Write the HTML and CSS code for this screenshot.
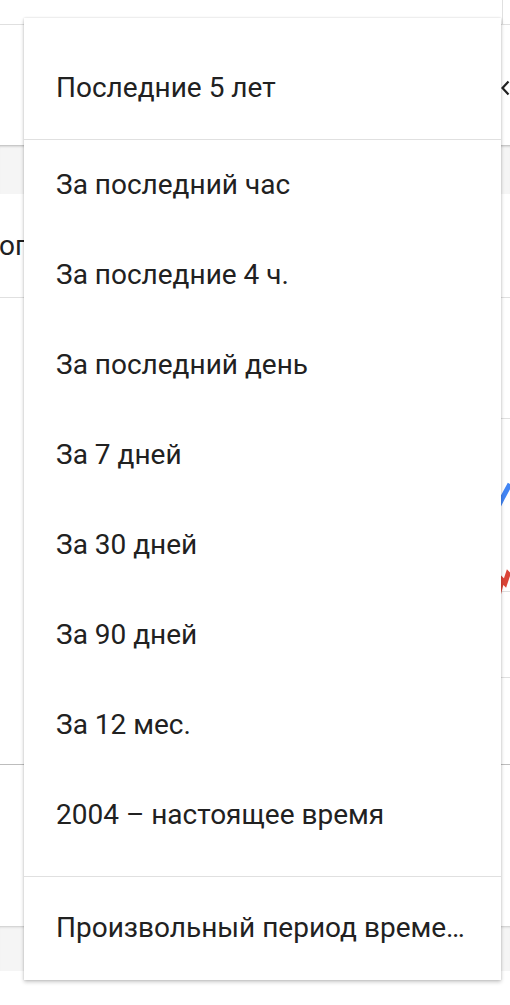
FILE: index.html
```html
<!DOCTYPE html>
<html lang="ru">
<head>
<meta charset="utf-8">
<title>Период времени</title>
<link rel="stylesheet" href="styles.css">
</head>
<body>
<div class="page">
  <div class="topbar"><div class="topbar-edge"></div></div>
  <div class="header">
    <svg class="share" width="10" height="16" viewBox="0 0 10 16"><path d="M8.5 1.5 L2.5 8 L8.5 14.5" fill="none" stroke="#222" stroke-width="2.2"/></svg>
  </div>
  <div class="band"></div>
  <div class="card">
    <div class="card-title">ог</div>
    <div class="chart">
      <div class="grid-row grid-row-1"></div>
      <div class="grid-row grid-row-2"></div>
      <div class="grid-row grid-row-3"></div>
      <svg class="lines" width="410" height="380" viewBox="100 298 410 380">
        <polyline points="440,560 470,540 499,505 503,497 510,484" fill="none" stroke="#4285f4" stroke-width="5"/>
        <polyline points="440,590 480,588 499,592 502,580 505,583 508,574 510,576" fill="none" stroke="#db4437" stroke-width="5"/>
      </svg>
    </div>
    <div class="legend"></div>
  </div>
  <div class="band band-low"></div>
</div>

<div class="menu">
  <div class="menu-top">
    <div class="item">Последние 5 лет</div>
  </div>
  <div class="menu-list">
    <div class="item">За последний час</div>
    <div class="item">За последние 4 ч.</div>
    <div class="item">За последний день</div>
    <div class="item">За 7 дней</div>
    <div class="item">За 30 дней</div>
    <div class="item">За 90 дней</div>
    <div class="item">За 12 мес.</div>
    <div class="item">2004 – настоящее время</div>
  </div>
  <div class="menu-bottom">
    <div class="item">Произвольный период време…</div>
  </div>
</div>
</body>
</html>
```

FILE: styles.css
```css
html, body {
  margin: 0;
  padding: 0;
  background: #fff;
}

body {
  font-family: "Roboto", "Noto Sans", sans-serif;
  color: #212121;
  width: 510px;
  height: 1005px;
  overflow: hidden;
  position: relative;
}

.page {
  display: flex;
  flex-direction: column;
}

.topbar {
  height: 24px;
  border-bottom: 1px solid #e0e0e0;
  display: flex;
  justify-content: flex-end;
}

.topbar-edge {
  width: 7px;
  border-left: 1px solid #e0e0e0;
}

.header {
  height: 120px;
  display: flex;
  justify-content: flex-end;
  align-items: center;
  padding-top: 6px;
  box-sizing: border-box;
}

.share {
  margin-right: 0;
}

.band {
  height: 48px;
  background: #f5f5f5;
  border-top: 1px solid #c9c9c9;
  box-shadow: inset 0 2px 2px -1px rgba(0, 0, 0, 0.12);
}

.card {
  display: flex;
  flex-direction: column;
}

.card-title {
  height: 103px;
  border-bottom: 1px solid #e0e0e0;
  font-size: 28px;
  line-height: 103px;
  white-space: nowrap;
  text-indent: -1px;
  color: #212121;
}

.chart {
  height: 380px;
  margin-left: 100px;
  position: relative;
  display: flex;
  flex-direction: column;
}

.grid-row {
  border-bottom: 1px solid #e0e0e0;
  box-sizing: border-box;
}

.grid-row-1 { height: 121px; }
.grid-row-2 { height: 174px; }
.grid-row-3 { height: 86px; }

.lines {
  position: absolute;
  left: 0;
  top: 0;
}

.legend {
  height: 87px;
  border-bottom: 1px solid #bdbdbd;
  margin-top: -1px;
}

.band-low {
  margin-top: 161px;
  height: 44px;
  border-top: 1px solid #d6d6d6;
  box-shadow: inset 0 2px 2px -1px rgba(0, 0, 0, 0.08);
  background: #f5f5f5;
}

.menu {
  position: absolute;
  left: 24px;
  top: 18px;
  width: 477px;
  background: #fff;
  box-shadow: 0 2px 4px rgba(0, 0, 0, 0.22), 0 0 2px rgba(0, 0, 0, 0.14);
}

.menu-top {
  padding: 25px 0 6px;
  border-bottom: 1px solid #e0e0e0;
}

.menu-list {
  padding: 0 0 16px;
  border-bottom: 1px solid #e0e0e0;
}

.menu-bottom {
  padding: 6px 0 7px;
}

.item {
  height: 90px;
  line-height: 90px;
  padding-left: 32px;
  font-size: 28px;
  color: #212121;
  white-space: nowrap;
  overflow: hidden;
}
```
